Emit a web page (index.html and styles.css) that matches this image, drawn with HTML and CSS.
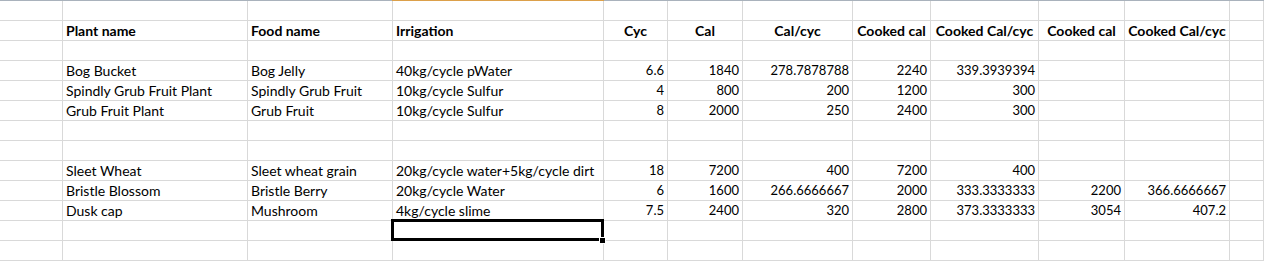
FILE: index.html
```html
<!DOCTYPE html>
<html>
<head>
<meta charset="utf-8">
<link rel="stylesheet" href="styles.css">
</head>
<body>
<div class="sheet">
  <div class="topbar"><div class="tb-gray tb-left"></div><div class="tb-sel"></div><div class="tb-gray tb-rest"></div></div>

  <div class="row"><div class="c"></div><div class="c"></div><div class="c"></div><div class="c"></div><div class="c"></div><div class="c"></div><div class="c"></div><div class="c"></div><div class="c"></div><div class="c"></div><div class="c"></div><div class="c"></div></div>

  <div class="row"><div class="c"></div><div class="c h">Plant name</div><div class="c h">Food name</div><div class="c h">Irrigation</div><div class="c h hc">Cyc</div><div class="c h hc">Cal</div><div class="c h hc">Cal/cyc</div><div class="c h hc">Cooked cal</div><div class="c h hc">Cooked Cal/cyc</div><div class="c h hc">Cooked cal</div><div class="c h hc">Cooked Cal/cyc</div><div class="c"></div></div>

  <div class="row"><div class="c"></div><div class="c"></div><div class="c"></div><div class="c"></div><div class="c"></div><div class="c"></div><div class="c"></div><div class="c"></div><div class="c"></div><div class="c"></div><div class="c"></div><div class="c"></div></div>

  <div class="row"><div class="c"></div><div class="c">Bog Bucket</div><div class="c">Bog Jelly</div><div class="c">40kg/cycle pWater</div><div class="c n">6.6</div><div class="c n">1840</div><div class="c n">278.7878788</div><div class="c n">2240</div><div class="c n">339.3939394</div><div class="c"></div><div class="c"></div><div class="c"></div></div>

  <div class="row"><div class="c"></div><div class="c">Spindly Grub Fruit Plant</div><div class="c">Spindly Grub Fruit</div><div class="c">10kg/cycle Sulfur</div><div class="c n">4</div><div class="c n">800</div><div class="c n">200</div><div class="c n">1200</div><div class="c n">300</div><div class="c"></div><div class="c"></div><div class="c"></div></div>

  <div class="row"><div class="c"></div><div class="c">Grub Fruit Plant</div><div class="c">Grub Fruit</div><div class="c">10kg/cycle Sulfur</div><div class="c n">8</div><div class="c n">2000</div><div class="c n">250</div><div class="c n">2400</div><div class="c n">300</div><div class="c"></div><div class="c"></div><div class="c"></div></div>

  <div class="row"><div class="c"></div><div class="c"></div><div class="c"></div><div class="c"></div><div class="c"></div><div class="c"></div><div class="c"></div><div class="c"></div><div class="c"></div><div class="c"></div><div class="c"></div><div class="c"></div></div>

  <div class="row"><div class="c"></div><div class="c"></div><div class="c"></div><div class="c"></div><div class="c"></div><div class="c"></div><div class="c"></div><div class="c"></div><div class="c"></div><div class="c"></div><div class="c"></div><div class="c"></div></div>

  <div class="row"><div class="c"></div><div class="c">Sleet Wheat</div><div class="c">Sleet wheat grain</div><div class="c">20kg/cycle water+5kg/cycle dirt</div><div class="c n">18</div><div class="c n">7200</div><div class="c n">400</div><div class="c n">7200</div><div class="c n">400</div><div class="c"></div><div class="c"></div><div class="c"></div></div>

  <div class="row"><div class="c"></div><div class="c">Bristle Blossom</div><div class="c">Bristle Berry</div><div class="c">20kg/cycle Water</div><div class="c n">6</div><div class="c n">1600</div><div class="c n">266.6666667</div><div class="c n">2000</div><div class="c n">333.3333333</div><div class="c n">2200</div><div class="c n">366.6666667</div><div class="c"></div></div>

  <div class="row"><div class="c"></div><div class="c">Dusk cap</div><div class="c">Mushroom</div><div class="c">4kg/cycle slime</div><div class="c n">7.5</div><div class="c n">2400</div><div class="c n">320</div><div class="c n">2800</div><div class="c n">373.3333333</div><div class="c n">3054</div><div class="c n">407.2</div><div class="c"></div></div>

  <div class="row"><div class="c"></div><div class="c"></div><div class="c"></div><div class="c active"><span class="sel-box"></span><span class="fill-handle"></span></div><div class="c"></div><div class="c"></div><div class="c"></div><div class="c"></div><div class="c"></div><div class="c"></div><div class="c"></div><div class="c"></div></div>

  <div class="row"><div class="c"></div><div class="c"></div><div class="c"></div><div class="c"></div><div class="c"></div><div class="c"></div><div class="c"></div><div class="c"></div><div class="c"></div><div class="c"></div><div class="c"></div><div class="c"></div></div>
</div>
</body>
</html>
```

FILE: styles.css
```css
html, body {
  margin: 0;
  padding: 0;
  background: #ffffff;
}

.sheet {
  width: 1264px;
  font-family: Lato, "Liberation Sans", sans-serif;
  font-size: 14px;
  color: #000000;
}

.topbar {
  display: flex;
  height: 1px;
}

.tb-gray {
  background: #a9b2bc;
}

.tb-left {
  width: 392px;
}

.tb-sel {
  width: 212px;
  background: #dca04a;
}

.tb-rest {
  flex: 1;
}

.row {
  display: grid;
  grid-template-columns: 63px 185px 145px 211px 64px 75px 110px 78px 108px 86px 105px 34px;
  height: 20px;
}

.c {
  box-sizing: border-box;
  height: 20px;
  border-right: 1px solid #d9d9d9;
  border-bottom: 1px solid #d9d9d9;
  padding: 0 3px 1px 3px;
  display: flex;
  align-items: flex-end;
  white-space: nowrap;
  overflow: visible;
  line-height: 16px;
}

.h {
  font-weight: 700;
}

.hc {
  justify-content: center;
  padding-left: 0;
  padding-right: 0;
}

.n {
  justify-content: flex-end;
  font-size: 13px;
  line-height: 15px;
  padding-bottom: 2px;
}

.active {
  position: relative;
}

.sel-box {
  position: absolute;
  left: -2px;
  top: -2px;
  right: -1px;
  bottom: -1px;
  border: 3px solid #000000;
  box-sizing: border-box;
}

.fill-handle {
  position: absolute;
  right: -3px;
  bottom: -4px;
  width: 5px;
  height: 5px;
  background: #000000;
  border: 1px solid #ffffff;
}
```
